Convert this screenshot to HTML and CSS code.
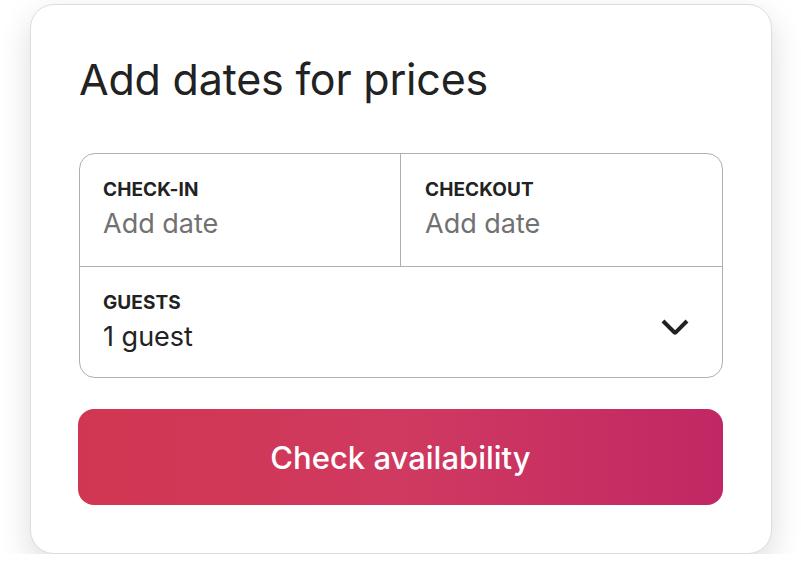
FILE: index.html
```html
<!DOCTYPE html>
<html>
<head>
<meta charset="utf-8">
<link rel="stylesheet" href="styles.css">
</head>
<body>
<div class="card">
  <h1 class="title">Add dates for prices</h1>
  <div class="picker">
    <div class="dates">
      <div class="field">
        <div class="label">CHECK-IN</div>
        <div class="value muted">Add date</div>
      </div>
      <div class="field field-right">
        <div class="label">CHECKOUT</div>
        <div class="value muted">Add date</div>
      </div>
    </div>
    <div class="guests">
      <div class="field">
        <div class="label">GUESTS</div>
        <div class="value">1 guest</div>
      </div>
      <svg class="chev" viewBox="0 0 32 32" aria-hidden="true"><path d="M28 12 16.7 23.3a1 1 0 0 1-1.4 0L4 12" fill="none" stroke="#222" stroke-width="4"/></svg>
    </div>
  </div>
  <button class="cta">Check availability</button>
</div>
</body>
</html>
```
FILE: styles.css
```css
html, body {
  margin: 0;
  padding: 0;
  background: #ffffff;
}
body {
  font-family: "Inter", "Noto Sans", sans-serif;
  color: #222222;
  padding: 4px 0 0 30px;
}
.card {
  box-sizing: border-box;
  width: 742px;
  height: 550px;
  border: 1px solid #dddddd;
  border-radius: 24px;
  background: #ffffff;
  box-shadow: 0 12px 32px rgba(0, 0, 0, 0.14);
  padding: 48px 48px 48px 48px;
  display: flex;
  flex-direction: column;
}
.title {
  margin: 0;
  font-size: 43px;
  font-weight: 400;
  line-height: 52px;
  letter-spacing: -0.2px;
  color: #222222;
}
.picker {
  margin-top: 48px;
  border: 1.5px solid #b0b0b0;
  border-radius: 16px;
  box-sizing: border-box;
  height: 226px;
  display: flex;
  flex-direction: column;
}
.dates {
  display: flex;
  height: 112px;
  border-bottom: 1.5px solid #b0b0b0;
}
.dates .field {
  flex: 1;
}
.field {
  padding: 24px 23px 0 23px;
}
.field-right {
  border-left: 1.5px solid #b0b0b0;
  padding-left: 24px;
}
.label {
  font-size: 19px;
  font-weight: 700;
  line-height: 24px;
  letter-spacing: 0.1px;
}
.value {
  margin-top: 4px;
  font-size: 27px;
  line-height: 36px;
  font-weight: 400;
}
.muted {
  color: #717171;
}
.guests {
  flex: 1;
  display: flex;
  align-items: flex-start;
  justify-content: space-between;
}
.chev {
  width: 32px;
  height: 32px;
  margin: 42px 31px 0 0;
}
.cta {
  margin-top: 31px;
  height: 96px;
  border: none;
  border-radius: 16px;
  background: linear-gradient(to right, #d13651 0%, #d03a60 50%, #c12764 100%);
  color: #ffffff;
  font-family: "Inter", "Noto Sans", sans-serif;
  font-size: 31px;
  font-weight: 500;
  width: 645px;
  margin-left: -1px;
}
```
